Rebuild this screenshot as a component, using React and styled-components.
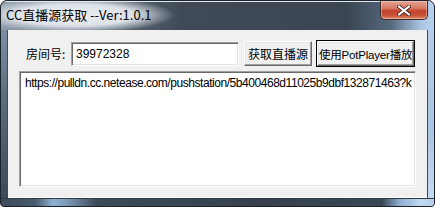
import React from "react";
import styled, { createGlobalStyle } from "styled-components";

const Global = createGlobalStyle`
  html, body { margin: 0; padding: 0; background: #ffffff; }
  body { width: 435px; height: 207px; overflow: hidden; }
`;

const Frame = styled.div`
  width: 435px;
  height: 207px;
  box-sizing: border-box;
  display: flex;
  flex-direction: column;
  border: 1px solid #1c242e;
  border-radius: 7px 7px 4px 4px;
  overflow: hidden;
  background: #3a4552;
`;

const TitleBar = styled.div`
  height: 28px;
  flex: none;
  display: flex;
  align-items: flex-start;
  position: relative;
  background:
    radial-gradient(ellipse 100px 18px at 74px 13px, rgba(238, 241, 245, 1) 0%, rgba(226, 231, 237, 0.95) 60%, rgba(226, 231, 237, 0) 100%),
    linear-gradient(90deg, #8d9aa8 0%, #5a6673 28%, #3f4a56 42%, #3b4652 80%, #55687d 90%, #a9c5e4 97%, #b8d2ec 100%);
  border-top: 1px solid #e3e9ef;
`;

const Title = styled.span`
  margin: 4px 0 0 5px;
  font-family: "Noto Sans CJK SC", "Liberation Sans", sans-serif;
  font-size: 13px;
  line-height: 17px;
  color: #000;
  white-space: nowrap;
`;

const CloseButton = styled.div`
  position: absolute;
  top: -1px;
  right: 6px;
  width: 48px;
  height: 19px;
  box-sizing: border-box;
  border: 1px solid #3b2a2a;
  border-top: none;
  border-radius: 0 0 5px 5px;
  background: linear-gradient(180deg, #e3a595 0%, #d77a63 40%, #c4412a 55%, #c9533a 80%, #dd8a6c 100%);
  box-shadow: inset 0 0 0 1px rgba(255, 220, 210, 0.45);
  display: flex;
  align-items: center;
  justify-content: center;
`;

const Middle = styled.div`
  flex: 1;
  min-height: 0;
  display: flex;
`;

const SideEdge = styled.div`
  width: 7px;
  flex: none;
  box-sizing: border-box;
  background: ${(p) =>
    p.$right
      ? "linear-gradient(180deg, #b3cdea 0%, #aac5e3 60%, #c3daf1 100%)"
      : "linear-gradient(180deg, #7d8fa3 0%, #5c6d80 40%, #3c4959 100%)"};
  border-${(p) => (p.$right ? "left" : "right")}: 1px solid #3d4a58;
`;

const BottomEdge = styled.div`
  height: 7px;
  flex: none;
  background: linear-gradient(90deg, #3c4958 0%, #4a5d72 8%, #8fb0d2 12%, #7f9cbc 15%, #3d4a58 22%, #36414d 60%, #3a4653 88%, #8eaed0 92%, #c2d9f0 97%, #b5cfea 100%);
  border-top: 1px solid #2f3944;
`;

const Client = styled.div`
  flex: 1;
  min-width: 0;
  background: #f0f0f0;
  display: flex;
  flex-direction: column;
  padding: 11px 10px 10px 11px;
  gap: 5px;
  font-family: "Noto Sans CJK SC", "Liberation Sans", sans-serif;
  font-size: 12px;
  border-bottom: 1px solid #ffffff;
`;

const Row = styled.div`
  display: flex;
  align-items: center;
  height: 25px;
`;

const Label = styled.span`
  flex: none;
  width: 52px;
  padding-left: 7px;
  box-sizing: border-box;
  white-space: nowrap;
  color: #000;
`;

const Sunken = styled.div`
  box-sizing: border-box;
  background: #fff;
  border-top: 1px solid #a0a0a0;
  border-left: 1px solid #a0a0a0;
  border-right: 1px solid #ffffff;
  border-bottom: 1px solid #ffffff;
  box-shadow: inset 1px 1px 0 #696969, inset -1px -1px 0 #e3e3e3;
`;

const RoomInput = styled(Sunken)`
  flex: none;
  width: 168px;
  height: 24px;
  margin-top: 1px;
  padding: 3px 4px;
  font-family: "Liberation Sans", "Noto Sans CJK SC", sans-serif;
  font-size: 12px;
  line-height: 17px;
  color: #000;
`;

const Button = styled.div`
  flex: none;
  box-sizing: border-box;
  height: 25px;
  margin-left: ${(p) => p.$gap}px;
  padding: 0 ${(p) => p.$pad}px;
  display: flex;
  align-items: center;
  white-space: nowrap;
  background: #f0f0f0;
  color: #000;
  font-family: "Liberation Sans", "Noto Sans CJK SC", sans-serif;
  font-size: ${(p) => p.$size}px;
  letter-spacing: ${(p) => p.$spacing || 0}px;
  border-top: 1px solid #ffffff;
  border-left: 1px solid #ffffff;
  border-right: 1px solid #696969;
  border-bottom: 1px solid #696969;
  box-shadow: inset -1px -1px 0 #a0a0a0, inset 1px 1px 0 #e3e3e3${(p) => (p.$default ? ", 0 0 0 1px #000" : "")};
`;

const Output = styled(Sunken)`
  flex: 1;
  margin-right: 1px;
  padding: 3px 5px;
  font-family: "Liberation Sans", sans-serif;
  font-size: 12px;
  line-height: 16px;
  color: #000;
  white-space: nowrap;
  overflow: hidden;
  letter-spacing: -0.45px;
`;

const CloseIcon = () => (
  <svg width="14" height="11" viewBox="0 0 14 11">
    <path d="M2 1.5 L12 9.5 M12 1.5 L2 9.5" stroke="#3a2420" strokeWidth="3.6" strokeLinecap="square" />
    <path d="M2 1.5 L12 9.5 M12 1.5 L2 9.5" stroke="#ffffff" strokeWidth="2" strokeLinecap="square" />
  </svg>
);

export default function App() {
  return (
    <>
      <Global />
      <Frame>
        <TitleBar>
          <Title>CC直播源获取 --Ver:1.0.1</Title>
          <CloseButton>
            <CloseIcon />
          </CloseButton>
        </TitleBar>
        <Middle>
          <SideEdge />
          <Client>
            <Row>
              <Label>房间号:</Label>
              <RoomInput>39972328</RoomInput>
              <Button $gap={5} $pad={3} $size={12}>获取直播源</Button>
              <Button $gap={5} $pad={1} $size={11.5} $spacing={-0.2} $default>使用PotPlayer播放</Button>
            </Row>
            <Output>https://pulldn.cc.netease.com/pushstation/5b400468d11025b9dbf132871463?k</Output>
          </Client>
          <SideEdge $right />
        </Middle>
        <BottomEdge />
      </Frame>
    </>
  );
}
